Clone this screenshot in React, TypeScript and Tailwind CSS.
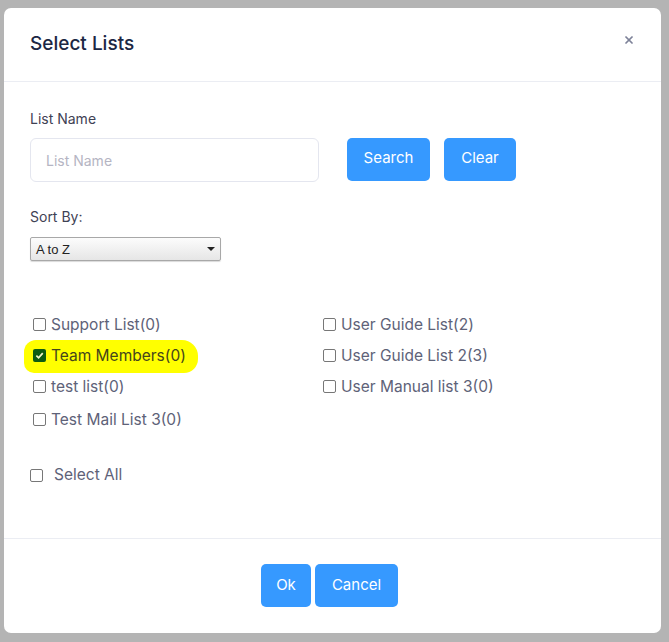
import { X } from 'lucide-react';

const leftLists = ['Support List(0)', 'Team Members(0)', 'test list(0)', 'Test Mail List 3(0)'];
const rightLists = ['User Guide List(2)', 'User Guide List 2(3)', 'User Manual list 3(0)'];

function Box({ checked }: { checked?: boolean }) {
  if (checked) {
    return (
      <span className="flex h-[13px] w-[13px] shrink-0 items-center justify-center rounded-[2px] bg-[#0d5c12]">
        <svg width="9" height="9" viewBox="0 0 10 10">
          <path d="M1.5 5.2 L4 7.6 L8.6 2.4" fill="none" stroke="#f4f6c8" strokeWidth="1.9" />
        </svg>
      </span>
    );
  }
  return <span className="h-[13px] w-[13px] shrink-0 rounded-[2px] border border-[#777] bg-white" />;
}

function ListItem({ label, checked, last }: { label: string; checked?: boolean; last?: boolean }) {
  return (
    <div className={`relative flex items-center pl-[3px] ${last ? 'mt-[2px] h-[31px]' : 'h-[31px]'}`}>
      {checked && (
        <span className="absolute left-[-6px] top-[0px] h-[33px] w-[174px] rounded-[12px_16px_14px_10px] bg-[#ffff00]" />
      )}
      <span className="relative flex items-center">
        <Box checked={checked} />
        <span className={`ml-[5px] text-[15.5px] ${checked ? 'text-[#45451c]' : 'text-[#5e6278]'}`}>{label}</span>
      </span>
    </div>
  );
}

export default function App() {
  return (
    <div
      className="h-[642px] w-[669px] bg-[#b4b4b4] pl-[4px] pt-[8px]"
      style={{ fontFamily: 'Inter, "Open Sans", sans-serif' }}
    >
      <div className="flex h-[625px] w-[657px] flex-col rounded-[7px] bg-white">
        {/* Header */}
        <div className="flex h-[74px] shrink-0 items-center justify-between border-b border-[#ebedf3] pl-[26px] pr-[26px]">
          <h2 className="text-[19px] font-medium text-[#1c2744]">Select Lists</h2>
          <X className="mb-[10px] h-[12px] w-[12px] text-[#7e8299]" strokeWidth={3.5} />
        </div>

        {/* Body */}
        <div className="flex-1 pl-[26px] pt-[27px]">
          <div className="text-[14px] leading-[20px] text-[#3f4254]">List Name</div>
          <div className="mt-[9px] flex items-start">
            <div className="flex h-[44px] w-[289px] items-center rounded-[6px] border border-[#e4e6ef] pl-[15px] text-[14px] text-[#b5b5c3]">
              List Name
            </div>
            <button className="ml-[28px] h-[43px] w-[83px] rounded-[5px] bg-[#3699ff] pb-[2px] text-[15px] text-white">Search</button>
            <button className="ml-[14px] h-[43px] w-[72px] rounded-[5px] bg-[#3699ff] pb-[2px] text-[15px] text-white">Clear</button>
          </div>

          <div className="mt-[25px] text-[14px] leading-[20px] text-[#3f4254]">Sort By:</div>
          <div
            className="mt-[10px] flex h-[24px] w-[191px] items-center justify-between rounded-[2px] border border-[#a8a8a8] bg-gradient-to-b from-[#fcfcfc] to-[#e6e6e6] pl-[5px] pr-[5px] pt-[2px] shadow-[0_1px_1px_rgba(0,0,0,0.15)]"
            style={{ fontFamily: '"Liberation Sans", Arial, sans-serif' }}
          >
            <span className="text-[13px] text-[#222]">A to Z</span>
            <svg width="8" height="4" viewBox="0 0 8 4" className="mb-[2px]">
              <path d="M0 0 H8 L4 4 Z" fill="#222" />
            </svg>
          </div>

          <div className="mt-[48px] flex">
            <div className="w-[290px]">
              {leftLists.map((l, i) => (
                <ListItem key={l} label={l} checked={i === 1} last={i === 3} />
              ))}
            </div>
            <div>
              {rightLists.map((l) => (
                <ListItem key={l} label={l} />
              ))}
            </div>
          </div>

          <div className="mt-[30px] flex h-[20px] items-center">
            <Box />
            <span className="ml-[11px] text-[15.5px] text-[#5e6278]">Select All</span>
          </div>
        </div>

        {/* Footer */}
        <div className="flex h-[95px] shrink-0 items-start justify-center gap-[4px] border-t border-[#ebedf3] pr-[6px] pt-[25px]">
          <button className="h-[43px] w-[50px] rounded-[5px] bg-[#3699ff] text-[15px] text-white">Ok</button>
          <button className="h-[43px] w-[83px] rounded-[5px] bg-[#3699ff] text-[15px] text-white">Cancel</button>
        </div>
      </div>
    </div>
  );
}
